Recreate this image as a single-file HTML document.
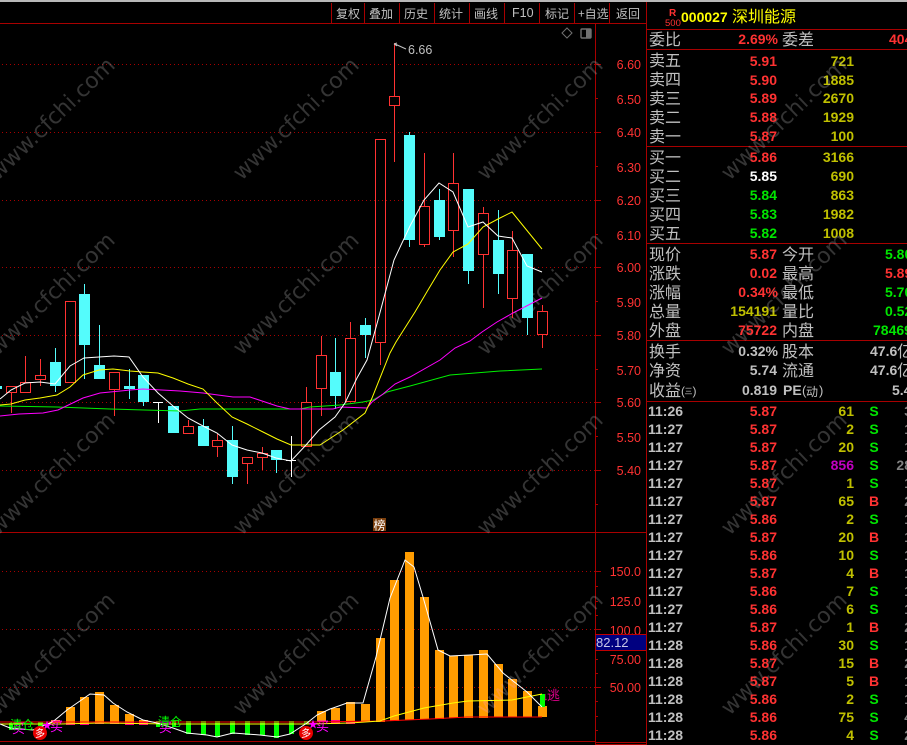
<!DOCTYPE html>
<html><head><meta charset="utf-8"><style>
html,body{margin:0;padding:0;background:#000;width:907px;height:745px;overflow:hidden}
svg{display:block}
text{font-family:"Liberation Sans","Noto Sans CJK SC",sans-serif}
.cn{font-family:"WenQuanYi Zen Hei","Noto Sans CJK SC",sans-serif;font-size:16px;fill:#c0c0c0}
.h{font-family:"WenQuanYi Zen Hei","Noto Sans CJK SC",sans-serif;font-size:12px;fill:#c0c0c0;letter-spacing:0}
.n{font-size:14px;font-weight:bold}
.e{text-anchor:end}
.r{fill:#ff3232}.y{fill:#c0c000}.g{fill:#00e600}.w{fill:#c0c0c0}.W{fill:#fff}.p{fill:#c000c0}.d{fill:#808080}
.ax{font-size:12.5px;fill:#ff3232;text-anchor:end}
.wm{font-family:"DejaVu Sans",sans-serif;font-size:22px;fill:#343434;text-anchor:middle;mix-blend-mode:lighten}
.c{shape-rendering:crispEdges}
</style></head><body>
<svg width="907" height="745" viewBox="0 0 907 745" xmlns="http://www.w3.org/2000/svg">
<rect width="907" height="745" fill="#000"/>
<rect class="c" x="0" y="0" width="907" height="2" fill="#b8b8b8"/>

<!-- frame -->
<g class="c" stroke="#a80000" stroke-width="1" fill="none">
<path d="M0 23.5H646M0 532.5H646M0 741.5H595M595.5 23V745M646.5 2V745"/>
<path d="M331.5 3V23M364.5 3V23M399.5 3V23M434.5 3V23M469.5 3V23M504.5 3V23M539.5 3V23M574.5 3V23M609.5 3V23"/>
<path d="M646 29.5H907M646 49.5H907M646 146.5H907M646 243.5H907M646 340.5H907M646 401.5H907"/>
<path d="M595 742.5H646M595 744.5H646"/>
<path d="M595 64.5h6M595 98.5h3M595 132.5h6M595 166.5h3M595 200.5h6M595 234.5h3M595 267.5h6M595 301.5h3M595 335.5h6M595 369.5h3M595 402.5h6M595 436.5h3M595 470.5h6M595 504.5h3"/>
<path d="M595 571.5h6M595 586.5h3M595 601.5h3M595 615.5h3M595 629.5h6M595 659.5h3M595 673.5h3M595 687.5h6M595 701.5h3M595 716.5h3M595 730.5h3"/>
</g>
<g class="c" stroke="#a80000" stroke-width="1" fill="none" stroke-dasharray="1 3">
<path d="M2 64.5H595M2 132.5H595M2 200.5H595M2 267.5H595M2 335.5H595M2 402.5H595M2 470.5H595M2 571.5H595M2 629.5H595M2 687.5H595"/>
</g>

<!-- toolbar -->
<text class="h" x="336" y="18">复权</text><text class="h" x="369" y="18">叠加</text><text class="h" x="404" y="18">历史</text><text class="h" x="439" y="18">统计</text><text class="h" x="474" y="18">画线</text>
<text x="512" y="17" font-size="12.5" fill="#c0c0c0">F10</text>
<text class="h" x="545" y="18">标记</text><text class="h" x="578" y="18">+自选</text><text class="h" x="616" y="18">返回</text>

<!-- icons -->
<path d="M567 28l5 5-5 5-5-5z" fill="none" stroke="#707070"/>
<rect x="581" y="29" width="10" height="9" rx="1" fill="none" stroke="#707070" stroke-width="1.4"/><rect x="586" y="29" width="5" height="9" fill="#707070"/>

<!-- candles: red hollow -->
<g class="c" fill="none" stroke="#ff3232">
<path d="M11.5 393V413M25.5 356V382M40.5 359V375M40.5 380V386M114.5 390V416M188.5 420V426M217.5 434V440M217.5 447V457M247.5 464V484M262.5 447V453M262.5 458V470M306.5 387V402M321.5 336V355M321.5 389V416M350.5 322V338M380.5 343V365M394.5 43V96M394.5 105V162M424.5 153V206M424.5 245V247M453.5 153V183M453.5 231V257M483.5 207V213M483.5 255V308M512.5 231V250M512.5 299V318M542.5 305V311M542.5 335V348"/>
<rect x="6.5" y="386.5" width="10" height="6"/><rect x="20.5" y="382.5" width="10" height="10"/><rect x="35.5" y="375.5" width="10" height="4"/>
<rect x="65.5" y="301.5" width="10" height="81"/><rect x="109.5" y="372.5" width="10" height="17"/><rect x="183.5" y="426.5" width="10" height="7"/>
<rect x="212.5" y="440.5" width="10" height="6"/><rect x="242.5" y="457.5" width="10" height="6"/><rect x="257.5" y="453.5" width="10" height="4"/>
<rect x="301.5" y="402.5" width="10" height="44"/><rect x="316.5" y="355.5" width="10" height="33"/><rect x="345.5" y="338.5" width="10" height="63"/>
<rect x="375.5" y="139.5" width="10" height="203"/><rect x="389.5" y="96.5" width="10" height="9"/><rect x="419.5" y="206.5" width="10" height="38"/>
<rect x="448.5" y="183.5" width="10" height="47"/><rect x="478.5" y="213.5" width="10" height="41"/><rect x="507.5" y="250.5" width="10" height="48"/><rect x="537.5" y="311.5" width="10" height="23"/>
</g>
<!-- candles: cyan -->
<g class="c" fill="#54fcfc" stroke="none">
<path d="M55 348h1v44h-1zM84 284h1v95h-1zM99 325h1v54h-1zM129 369h1v30h-1zM143 375h1v31h-1zM203 419h1v27h-1zM232 426h1v58h-1zM276 450h1v23h-1zM335 338h1v71h-1zM365 318h1v40h-1zM409 132h1v115h-1zM439 189h1v51h-1zM468 189h1v95h-1zM498 210h1v84h-1zM527 254h1v81h-1z"/>
<rect x="0" y="386" width="2" height="3"/><rect x="50" y="362" width="11" height="24"/><rect x="79" y="294" width="11" height="51"/><rect x="94" y="365" width="11" height="14"/>
<rect x="124" y="386" width="11" height="3"/><rect x="138" y="375" width="11" height="27"/><rect x="168" y="406" width="11" height="27"/><rect x="198" y="426" width="11" height="20"/>
<rect x="227" y="440" width="11" height="37"/><rect x="271" y="450" width="11" height="10"/><rect x="330" y="372" width="11" height="24"/><rect x="360" y="325" width="11" height="10"/>
<rect x="404" y="135" width="11" height="105"/><rect x="434" y="200" width="11" height="37"/><rect x="463" y="189" width="11" height="82"/><rect x="493" y="240" width="11" height="34"/><rect x="522" y="254" width="11" height="64"/>
</g>
<g class="c" stroke="#fff" fill="none"><path d="M153 402.5H163M158.5 402V423M286 460.5H296M291.5 436V477"/></g>

<!-- MA lines -->
<g fill="none" stroke-width="1">
<polyline stroke="#00f000" points="0,406 57,407 110,409 180,411 200,409 300,409 310,407 340,405 363,402 373,400 387,392 410,386 450,375 500,371 542,369"/>
<polyline stroke="#ff00ff" points="0,416 19,414 43,413 58,410 83,398 100,393 130,390 143,389 180,391 203,393 233,397 250,397 277,406 290,409 333,409 340,407 367,408 372,402 383,394 395,384 410,377 440,360 455,348 470,341 482,332 497,322 513,313 542,298"/>
<polyline stroke="#ffff00" points="0,405 11,404 25,400 40,398 57,395 70,387 83,375 99,370 113,369 130,371 143,372 158,373 173,378 188,384 203,389 217,403 232,417 247,424 263,432 277,439 291,445 320,445 343,430 365,413 372,398 390,353 396,342 415,312 428,290 440,270 453,252 468,244 483,227 498,219 512,212 542,249"/>
<polyline stroke="#fff" points="0,399 11,390 25,383 40,382 55,384 70,366 84,358 99,357 114,356 129,357 143,377 158,393 173,406 188,418 203,426 217,433 232,445 247,450 262,453 276,458 291,461 306,445 319,430 335,417 345,403 357,378 367,360 378,320 394,260 410,226 424,200 439,183 453,192 468,227 483,222 498,236 512,238 527,266 542,272"/>
</g>

<!-- high label -->
<path d="M394 44l3-1M394 44l3 2M395 44l11 5" stroke="#c0c0c0" fill="none"/>
<text x="408" y="54" font-size="12.5" fill="#c0c0c0">6.66</text>

<!-- axis labels -->
<text class="ax" x="641" y="69">6.60</text><text class="ax" x="641" y="104">6.50</text><text class="ax" x="641" y="137">6.40</text><text class="ax" x="641" y="172">6.30</text><text class="ax" x="641" y="205">6.20</text><text class="ax" x="641" y="240">6.10</text><text class="ax" x="641" y="272">6.00</text><text class="ax" x="641" y="307">5.90</text><text class="ax" x="641" y="340">5.80</text><text class="ax" x="641" y="375">5.70</text><text class="ax" x="641" y="407">5.60</text><text class="ax" x="641" y="442">5.50</text><text class="ax" x="641" y="475">5.40</text>
<text class="ax" x="641" y="576">150.0</text><text class="ax" x="641" y="606">125.0</text><text class="ax" x="641" y="635">100.0</text><text class="ax" x="641" y="664">75.00</text><text class="ax" x="641" y="692">50.00</text>
<rect class="c" x="596" y="635" width="50" height="15" fill="#000080"/>
<path class="c" d="M595 634.5H646M595 650.5H646" stroke="#c00000"/>
<text x="596" y="647" font-size="13" fill="#c8c8e8">82.12</text>

<!-- 榜 -->
<rect class="c" x="373" y="518" width="13" height="13" fill="#7a3e0c"/>
<text x="373.5" y="529.5" font-size="12" fill="#fff" font-family="Noto Sans CJK SC">榜</text>

<!-- lower bars -->
<g class="c" fill="#ff0080">
<rect x="66" y="723" width="9" height="2"/><rect x="80" y="723" width="9" height="2"/><rect x="95" y="722" width="9" height="2"/><rect x="110" y="722" width="9" height="2"/><rect x="125" y="722" width="9" height="3"/><rect x="139" y="722" width="9" height="3"/><rect x="331" y="720" width="9" height="4"/><rect x="346" y="721" width="9" height="3"/>
</g>
<g class="c" fill="#ff9c00">
<rect x="51" y="720" width="9" height="3"/><rect x="66" y="707" width="9" height="16"/><rect x="80" y="697" width="9" height="26"/><rect x="95" y="692" width="9" height="30"/><rect x="110" y="705" width="9" height="17"/><rect x="125" y="714" width="9" height="8"/><rect x="139" y="720" width="9" height="2"/>
<rect x="317" y="711" width="9" height="10"/><rect x="331" y="708" width="9" height="12"/><rect x="346" y="702" width="9" height="19"/><rect x="361" y="704" width="9" height="18"/><rect x="376" y="638" width="9" height="84"/><rect x="390" y="580" width="9" height="141"/><rect x="405" y="552" width="9" height="168"/><rect x="420" y="597" width="9" height="122"/><rect x="435" y="650" width="9" height="69"/><rect x="449" y="656" width="9" height="62"/><rect x="464" y="655" width="9" height="63"/><rect x="479" y="650" width="9" height="68"/><rect x="494" y="664" width="9" height="53"/><rect x="508" y="679" width="9" height="38"/><rect x="523" y="691" width="9" height="26"/><rect x="538" y="706" width="9" height="11"/>
</g>
<g class="c" fill="#00ff00">
<rect x="186" y="721" width="5" height="13"/><rect x="201" y="721" width="5" height="14"/><rect x="215" y="721" width="5" height="16"/><rect x="230" y="721" width="5" height="13"/><rect x="245" y="721" width="5" height="14"/><rect x="260" y="721" width="5" height="14"/><rect x="274" y="721" width="5" height="17"/><rect x="289" y="721" width="5" height="13"/>
<rect x="9" y="723" width="4" height="7"/><rect x="38" y="722" width="5" height="4"/><rect x="156" y="721" width="4" height="6"/><rect x="172" y="721" width="4" height="6"/><rect x="304" y="721" width="5" height="3"/><rect x="540" y="694" width="5" height="13"/>
</g>
<g fill="none" stroke-width="1">
<polyline stroke="#ff0000" points="0,722 310,722 383,721 430,719 467,717 542,717"/>
<polyline stroke="#ffff00" points="0,724 60,724 100,723 170,724 310,724 350,723 380,721 394,716 409,712 424,708 453,703 468,701 512,700 542,694"/>
<polyline stroke="#fff" points="0,724 10,728 33,730 50,723 55,720 67,710 80,701 90,694 104,695 113,703 127,712 143,720 157,723 173,728 187,733 207,735 217,737 233,733 260,735 277,737 290,734 307,723 317,715 330,709 333,708 347,703 363,703 376,657 390,598 405,560 414,567 423,597 438,650 450,656 470,655 487,654 503,673 527,692 542,707"/>
</g>

<!-- signals -->
<text x="12" y="733" font-size="13" fill="#ff00ff" font-family="Noto Sans CJK SC">买</text>
<text x="10" y="729" font-size="12" fill="#00ff00" font-family="Noto Sans CJK SC">清仓</text>
<text x="159" y="732" font-size="13" fill="#ff00ff" font-family="Noto Sans CJK SC">买</text>
<text x="158" y="726" font-size="12" fill="#00ff00" font-family="Noto Sans CJK SC">清仓</text>
<text x="42" y="729" font-size="10" fill="#ff00ff">★</text><text x="50" y="731" font-size="13" fill="#ff00ff" font-family="Noto Sans CJK SC">买</text>
<text x="308" y="728" font-size="10" fill="#ff00ff">★</text><text x="316" y="731" font-size="13" fill="#ff00ff" font-family="Noto Sans CJK SC">买</text>
<circle cx="40" cy="733" r="7" fill="#e80000"/><text x="35" y="737" font-size="10" fill="#fff" font-family="Noto Sans CJK SC">多</text>
<circle cx="306" cy="733" r="7" fill="#e80000"/><text x="301" y="737" font-size="10" fill="#fff" font-family="Noto Sans CJK SC">多</text>
<text x="543" y="700" font-size="11" fill="#e0008c">↓</text><text x="547" y="700" font-size="13" fill="#e0008c" font-family="Noto Sans CJK SC">逃</text>

<!-- quote header -->
<text x="669" y="16" font-size="10" font-weight="bold" fill="#ff3232">R</text>
<text x="665" y="26" font-size="9.5" fill="#ff3232">500</text>
<text x="681" y="22" font-size="14" font-weight="bold" fill="#ffff00">000027</text>
<text x="732" y="22" font-size="16" fill="#ffff00" font-family="WenQuanYi Zen Hei,Noto Sans CJK SC">深圳能源</text>

<!-- labels left -->
<text class="cn" x="649" y="45">委比</text><text class="cn" x="649" y="66">卖五</text><text class="cn" x="649" y="85">卖四</text><text class="cn" x="649" y="104">卖三</text><text class="cn" x="649" y="123">卖二</text><text class="cn" x="649" y="142">卖一</text>
<text class="cn" x="649" y="163">买一</text><text class="cn" x="649" y="182">买二</text><text class="cn" x="649" y="201">买三</text><text class="cn" x="649" y="220">买四</text><text class="cn" x="649" y="239">买五</text>
<text class="cn" x="649" y="260">现价</text><text class="cn" x="649" y="279">涨跌</text><text class="cn" x="649" y="298">涨幅</text><text class="cn" x="649" y="317">总量</text><text class="cn" x="649" y="336">外盘</text>
<text class="cn" x="649" y="357">换手</text><text class="cn" x="649" y="376">净资</text><text class="cn" x="649" y="396">收益</text>
<text x="681" y="395" font-size="12" fill="#c0c0c0">(</text><text x="684.5" y="394" font-size="8" fill="#c0c0c0" font-family="Noto Sans CJK SC">三</text><text x="692.5" y="395" font-size="12" fill="#c0c0c0">)</text>
<text class="cn" x="782" y="45">委差</text><text class="cn" x="782" y="260">今开</text><text class="cn" x="782" y="279">最高</text><text class="cn" x="782" y="298">最低</text><text class="cn" x="782" y="317">量比</text><text class="cn" x="782" y="336">内盘</text><text class="cn" x="782" y="357">股本</text><text class="cn" x="782" y="376">流通</text>
<text class="n w" x="783" y="395">PE</text><text x="802" y="395" font-size="13" fill="#c0c0c0">(</text><text x="806" y="396" font-size="12" fill="#c0c0c0" font-family="Noto Sans CJK SC">动</text><text x="819" y="395" font-size="13" fill="#c0c0c0">)</text>

<!-- numbers -->
<text class="n e r" x="778" y="44">2.69%</text>
<text class="n e r" x="777" y="66">5.91</text><text class="n e r" x="777" y="85">5.90</text><text class="n e r" x="777" y="103">5.89</text><text class="n e r" x="777" y="122">5.88</text><text class="n e r" x="777" y="141">5.87</text>
<text class="n e r" x="777" y="162">5.86</text><text class="n e W" x="777" y="181">5.85</text><text class="n e g" x="777" y="200">5.84</text><text class="n e g" x="777" y="219">5.83</text><text class="n e g" x="777" y="238">5.82</text>
<text class="n e r" x="777" y="259">5.87</text><text class="n e r" x="777" y="278">0.02</text><text class="n e r" x="778" y="297">0.34%</text><text class="n e y" x="777" y="316">154191</text><text class="n e r" x="777" y="335">75722</text>
<text class="n e w" x="778" y="356">0.32%</text><text class="n e w" x="777" y="375">5.74</text><text class="n e w" x="777" y="395">0.819</text>
<text class="n e y" x="854" y="66">721</text><text class="n e y" x="854" y="85">1885</text><text class="n e y" x="854" y="103">2670</text><text class="n e y" x="854" y="122">1929</text><text class="n e y" x="854" y="141">100</text>
<text class="n e y" x="854" y="162">3166</text><text class="n e y" x="854" y="181">690</text><text class="n e y" x="854" y="200">863</text><text class="n e y" x="854" y="219">1982</text><text class="n e y" x="854" y="238">1008</text>
<text class="n r" x="889" y="44">404</text>
<text class="n g" x="885" y="259">5.80</text><text class="n r" x="885" y="278">5.89</text><text class="n g" x="885" y="297">5.70</text><text class="n g" x="885" y="316">0.52</text><text class="n g" x="873" y="335">78469</text>
<text class="n w" x="870" y="356">47.6</text><text class="cn" x="897" y="357">亿</text><text class="n w" x="870" y="375">47.6</text><text class="cn" x="897" y="376">亿</text><text class="n w" x="892" y="395">5.4</text>

<!-- ticks -->
<g class="n w">
<text x="648" y="416">11:26</text><text x="648" y="434">11:27</text><text x="648" y="452">11:27</text><text x="648" y="470">11:27</text><text x="648" y="488">11:27</text><text x="648" y="506">11:27</text><text x="648" y="524">11:27</text><text x="648" y="542">11:27</text><text x="648" y="560">11:27</text><text x="648" y="578">11:27</text><text x="648" y="596">11:27</text><text x="648" y="614">11:27</text><text x="648" y="632">11:27</text><text x="648" y="650">11:28</text><text x="648" y="668">11:28</text><text x="648" y="686">11:28</text><text x="648" y="704">11:28</text><text x="648" y="722">11:28</text><text x="648" y="740">11:28</text>
</g>
<g class="n r" text-anchor="end">
<text x="777" y="416">5.87</text><text x="777" y="434">5.87</text><text x="777" y="452">5.87</text><text x="777" y="470">5.87</text><text x="777" y="488">5.87</text><text x="777" y="506">5.87</text><text x="777" y="524">5.86</text><text x="777" y="542">5.87</text><text x="777" y="560">5.86</text><text x="777" y="578">5.87</text><text x="777" y="596">5.86</text><text x="777" y="614">5.86</text><text x="777" y="632">5.87</text><text x="777" y="650">5.86</text><text x="777" y="668">5.87</text><text x="777" y="686">5.87</text><text x="777" y="704">5.86</text><text x="777" y="722">5.86</text><text x="777" y="740">5.86</text>
</g>
<g class="n y" text-anchor="end">
<text x="854" y="416">61</text><text x="854" y="434">2</text><text x="854" y="452">20</text><text x="854" y="470" class="p">856</text><text x="854" y="488">1</text><text x="854" y="506">65</text><text x="854" y="524">2</text><text x="854" y="542">20</text><text x="854" y="560">10</text><text x="854" y="578">4</text><text x="854" y="596">7</text><text x="854" y="614">6</text><text x="854" y="632">1</text><text x="854" y="650">30</text><text x="854" y="668">15</text><text x="854" y="686">5</text><text x="854" y="704">2</text><text x="854" y="722">75</text><text x="854" y="740">4</text>
</g>
<g class="n g" text-anchor="middle">
<text x="874" y="416">S</text><text x="874" y="434">S</text><text x="874" y="452">S</text><text x="874" y="470">S</text><text x="874" y="488">S</text><text x="874" y="506" class="r">B</text><text x="874" y="524">S</text><text x="874" y="542" class="r">B</text><text x="874" y="560">S</text><text x="874" y="578" class="r">B</text><text x="874" y="596">S</text><text x="874" y="614">S</text><text x="874" y="632" class="r">B</text><text x="874" y="650">S</text><text x="874" y="668" class="r">B</text><text x="874" y="686" class="r">B</text><text x="874" y="704">S</text><text x="874" y="722">S</text><text x="874" y="740">S</text>
</g>
<g class="n d" text-anchor="end">
<text x="912" y="416">3</text><text x="912" y="434">1</text><text x="912" y="452">1</text><text x="912" y="470">28</text><text x="912" y="488">1</text><text x="912" y="506">2</text><text x="912" y="524">1</text><text x="912" y="542">1</text><text x="912" y="560">1</text><text x="912" y="578">1</text><text x="912" y="596">1</text><text x="912" y="614">1</text><text x="912" y="632">2</text><text x="912" y="650">1</text><text x="912" y="668">2</text><text x="912" y="686">1</text><text x="912" y="704">1</text><text x="912" y="722">4</text><text x="912" y="740">2</text>
</g>

<!-- watermarks -->
<g>
<text class="wm" transform="translate(57,124) rotate(-44)">www.cfchi.com</text><text class="wm" transform="translate(301,124) rotate(-44)">www.cfchi.com</text><text class="wm" transform="translate(545,124) rotate(-44)">www.cfchi.com</text><text class="wm" transform="translate(789,124) rotate(-44)">www.cfchi.com</text>
<text class="wm" transform="translate(57,299) rotate(-44)">www.cfchi.com</text><text class="wm" transform="translate(301,299) rotate(-44)">www.cfchi.com</text><text class="wm" transform="translate(545,299) rotate(-44)">www.cfchi.com</text><text class="wm" transform="translate(789,299) rotate(-44)">www.cfchi.com</text>
<text class="wm" transform="translate(57,479) rotate(-44)">www.cfchi.com</text><text class="wm" transform="translate(301,479) rotate(-44)">www.cfchi.com</text><text class="wm" transform="translate(545,479) rotate(-44)">www.cfchi.com</text><text class="wm" transform="translate(789,479) rotate(-44)">www.cfchi.com</text>
<text class="wm" transform="translate(57,659) rotate(-44)">www.cfchi.com</text><text class="wm" transform="translate(301,659) rotate(-44)">www.cfchi.com</text><text class="wm" transform="translate(545,659) rotate(-44)">www.cfchi.com</text><text class="wm" transform="translate(789,659) rotate(-44)">www.cfchi.com</text>
</g>
</svg>
</body></html>
